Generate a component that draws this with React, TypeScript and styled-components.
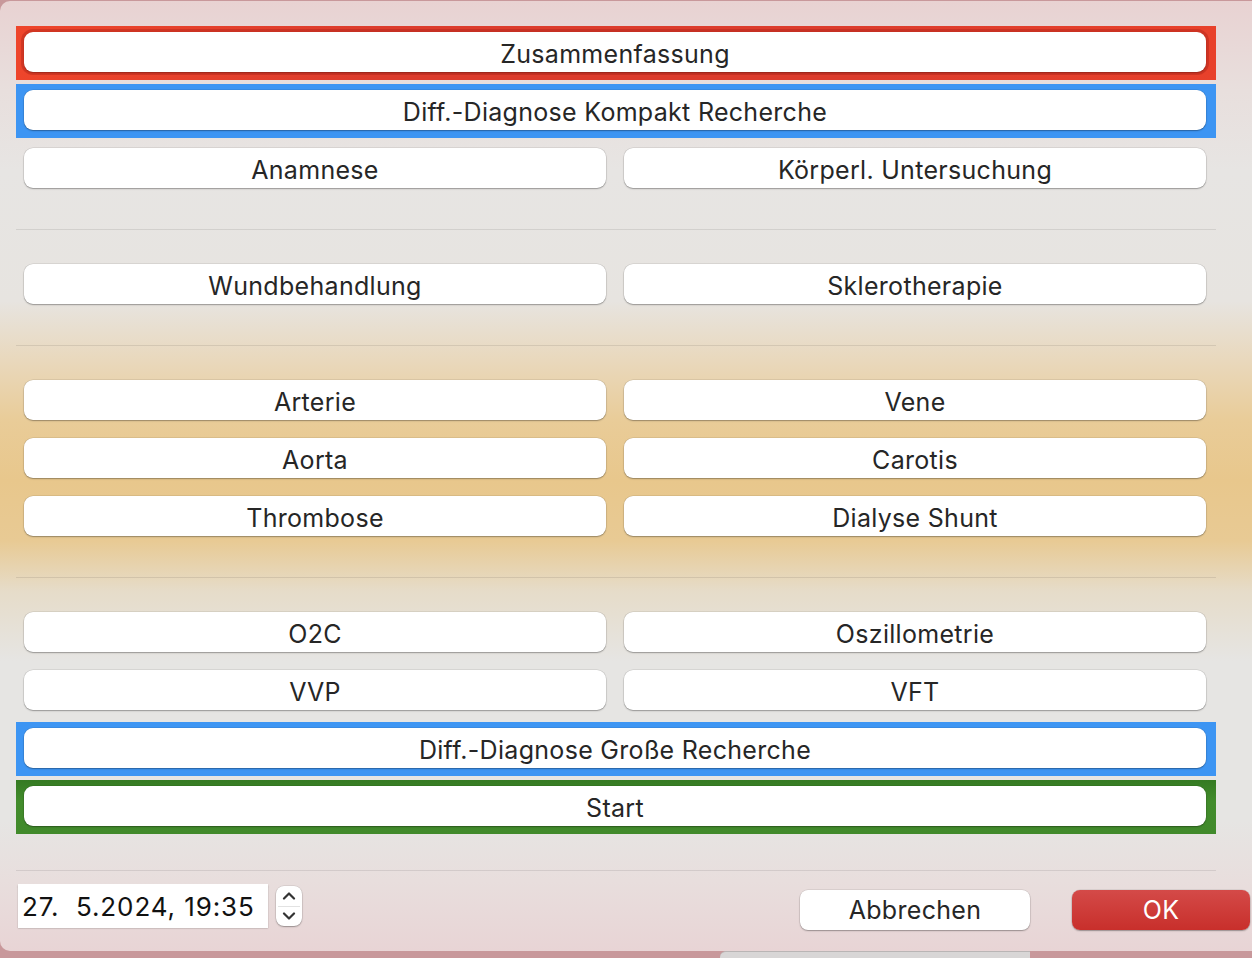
import React from 'react';
import styled, { createGlobalStyle } from 'styled-components';

const GlobalStyle = createGlobalStyle`
  html, body {
    margin: 0;
    padding: 0;
    background: #c8989b;
  }
  body {
    font-family: Inter, "Noto Sans", sans-serif;
    overflow: hidden;
  }
`;

const Screen = styled.div`
  width: 1252px;
  height: 958px;
  display: flex;
  flex-direction: column;
  padding-top: 1px;
  box-sizing: border-box;
`;

const Window = styled.div`
  height: 951px;
  box-sizing: border-box;
  border-radius: 10px 0 0 10px;
  padding: 25px 36px 0 16px;
  display: flex;
  flex-direction: column;
  background:
    linear-gradient(
      to bottom,
      #e8d2d2 0px,
      #e8dfdd 90px,
      #e7e5e3 170px,
      #e7e4e0 300px,
      #e9d8bc 360px,
      #e9cc98 420px,
      #e8c78c 480px,
      #e8ca94 540px,
      #e6dcc9 590px,
      #e6e5e3 660px,
      #e6e5e3 820px,
      #e8dedd 880px,
      #e8d4d5 951px
    );
`;

const Peek = styled.div`
  margin-left: 720px;
  width: 310px;
  height: 6px;
  border-radius: 6px 0 0 0;
  background: #d8d6d6;
  border-top: 1px solid #b9b5b5;
`;

const Highlight = styled.div<{ $tone: 'red' | 'blue' | 'green' }>`
  padding: 6px 10px 8px 8px;
  margin-top: ${({ $tone }) => ($tone === 'red' ? '0' : '4px')};
  background: ${({ $tone }) =>
    $tone === 'red'
      ? 'linear-gradient(to right, #ee452b, #dc3c2d 30%, #dc3c2d 70%, #e8412b)'
      : $tone === 'blue'
        ? '#3d95f3'
        : 'linear-gradient(to bottom, #357a22, #428c2c 40%, #418a2b)'};
`;

const Button = styled.div<{ $ring?: string }>`
  height: 40px;
  box-sizing: border-box;
  padding-top: 3px;
  border-radius: 9px;
  background: #ffffff;
  display: flex;
  align-items: center;
  justify-content: center;
  font-size: 25px;
  color: #262626;
  letter-spacing: 0.3px;
  box-shadow: ${({ $ring }) =>
    $ring
      ? `0 0 0 3px ${$ring}, 0 1px 1.5px rgba(0, 0, 0, 0.35)`
      : '0 0 0 0.5px rgba(0, 0, 0, 0.12), 0 1px 1.5px rgba(0, 0, 0, 0.3)'};
`;

const Grid = styled.div`
  display: grid;
  grid-template-columns: 1fr 1fr;
  column-gap: 18px;
  row-gap: 18px;
  padding: 0 10px 0 8px;
`;

const FirstGrid = styled(Grid)`
  margin-top: 10px;
`;

const Divider = styled.div<{ $top?: number; $bottom?: number }>`
  height: 1px;
  background: rgba(0, 0, 0, 0.09);
  margin-top: ${({ $top }) => $top ?? 41}px;
  margin-bottom: ${({ $bottom }) => $bottom ?? 34}px;
`;

const BlueAfterGrid = styled.div`
  margin-top: 8px;
`;

const Footer = styled.div`
  display: flex;
  align-items: flex-start;
  padding-left: 2px;
  margin-right: -36px;
`;

const DateField = styled.div`
  width: 250px;
  height: 44px;
  background: #ffffff;
  box-sizing: border-box;
  padding: 1px 0 0 4px;
  display: flex;
  align-items: center;
  font-size: 26px;
  letter-spacing: 0.9px;
  color: #111111;
  white-space: pre;
  box-shadow: 0 0.5px 1.5px rgba(0, 0, 0, 0.3);
`;

const Stepper = styled.div`
  margin-left: 8px;
  margin-top: 2px;
  width: 26px;
  height: 40px;
  border-radius: 8px;
  background: #ffffff;
  box-shadow: 0 0 0 0.5px rgba(0, 0, 0, 0.12), 0 1px 1.5px rgba(0, 0, 0, 0.3);
  display: flex;
  flex-direction: column;
  align-items: center;
  justify-content: space-between;
  padding: 5px 0;
  box-sizing: border-box;
  position: relative;
`;

const StepDivider = styled.div`
  position: absolute;
  left: 2px;
  right: 2px;
  top: 20px;
  height: 1px;
  background: #e2e2e2;
`;

const Spacer = styled.div`
  flex: 1;
`;

const DialogButton = styled.div<{ $primary?: boolean; $width: number }>`
  margin-top: 6px;
  width: ${({ $width }) => $width}px;
  height: 40px;
  border-radius: 8px;
  display: flex;
  align-items: center;
  justify-content: center;
  font-size: 25px;
  letter-spacing: 0.3px;
  color: ${({ $primary }) => ($primary ? '#ffffff' : '#262626')};
  background: ${({ $primary }) =>
    $primary ? 'linear-gradient(to bottom, #d44a48, #c82f2b)' : '#ffffff'};
  box-shadow: 0 0 0 0.5px rgba(0, 0, 0, 0.12), 0 1px 1.5px rgba(0, 0, 0, 0.3);
`;

const OkButton = styled(DialogButton)`
  margin-left: 42px;
  margin-right: 2px;
`;

const Chevron = ({ up }: { up?: boolean }) => (
  <svg width="14" height="9" viewBox="0 0 14 9">
    <path
      d={up ? 'M2 7.5 L7 2.5 L12 7.5' : 'M2 1.5 L7 6.5 L12 1.5'}
      fill="none"
      stroke="#333333"
      strokeWidth="2.2"
      strokeLinecap="round"
      strokeLinejoin="round"
    />
  </svg>
);

const pairs: [string, string][][] = [
  [['Anamnese', 'Körperl. Untersuchung']],
  [['Wundbehandlung', 'Sklerotherapie']],
  [
    ['Arterie', 'Vene'],
    ['Aorta', 'Carotis'],
    ['Thrombose', 'Dialyse Shunt'],
  ],
  [
    ['O2C', 'Oszillometrie'],
    ['VVP', 'VFT'],
  ],
];

const renderPairs = (rows: [string, string][]) =>
  rows.flatMap(([a, b]) => [<Button key={a}>{a}</Button>, <Button key={b}>{b}</Button>]);

export default function App() {
  return (
    <Screen>
      <GlobalStyle />
      <Window>
        <Highlight $tone="red">
          <Button $ring="rgba(160, 30, 20, 0.35)">Zusammenfassung</Button>
        </Highlight>
        <Highlight $tone="blue">
          <Button>Diff.-Diagnose Kompakt Recherche</Button>
        </Highlight>

        <FirstGrid>{renderPairs(pairs[0])}</FirstGrid>
        <Divider />
        <Grid>{renderPairs(pairs[1])}</Grid>
        <Divider />
        <Grid>{renderPairs(pairs[2])}</Grid>
        <Divider />
        <Grid>{renderPairs(pairs[3])}</Grid>

        <BlueAfterGrid>
          <Highlight $tone="blue">
            <Button>Diff.-Diagnose Große Recherche</Button>
          </Highlight>
        </BlueAfterGrid>
        <Highlight $tone="green">
          <Button>Start</Button>
        </Highlight>

        <Divider $top={36} $bottom={13} />

        <Footer>
          <DateField>{'27.  5.2024, 19:35'}</DateField>
          <Stepper>
            <Chevron up />
            <StepDivider />
            <Chevron />
          </Stepper>
          <Spacer />
          <DialogButton $width={230}>Abbrechen</DialogButton>
          <OkButton $primary $width={178}>
            OK
          </OkButton>
        </Footer>
      </Window>
      <Peek />
    </Screen>
  );
}
